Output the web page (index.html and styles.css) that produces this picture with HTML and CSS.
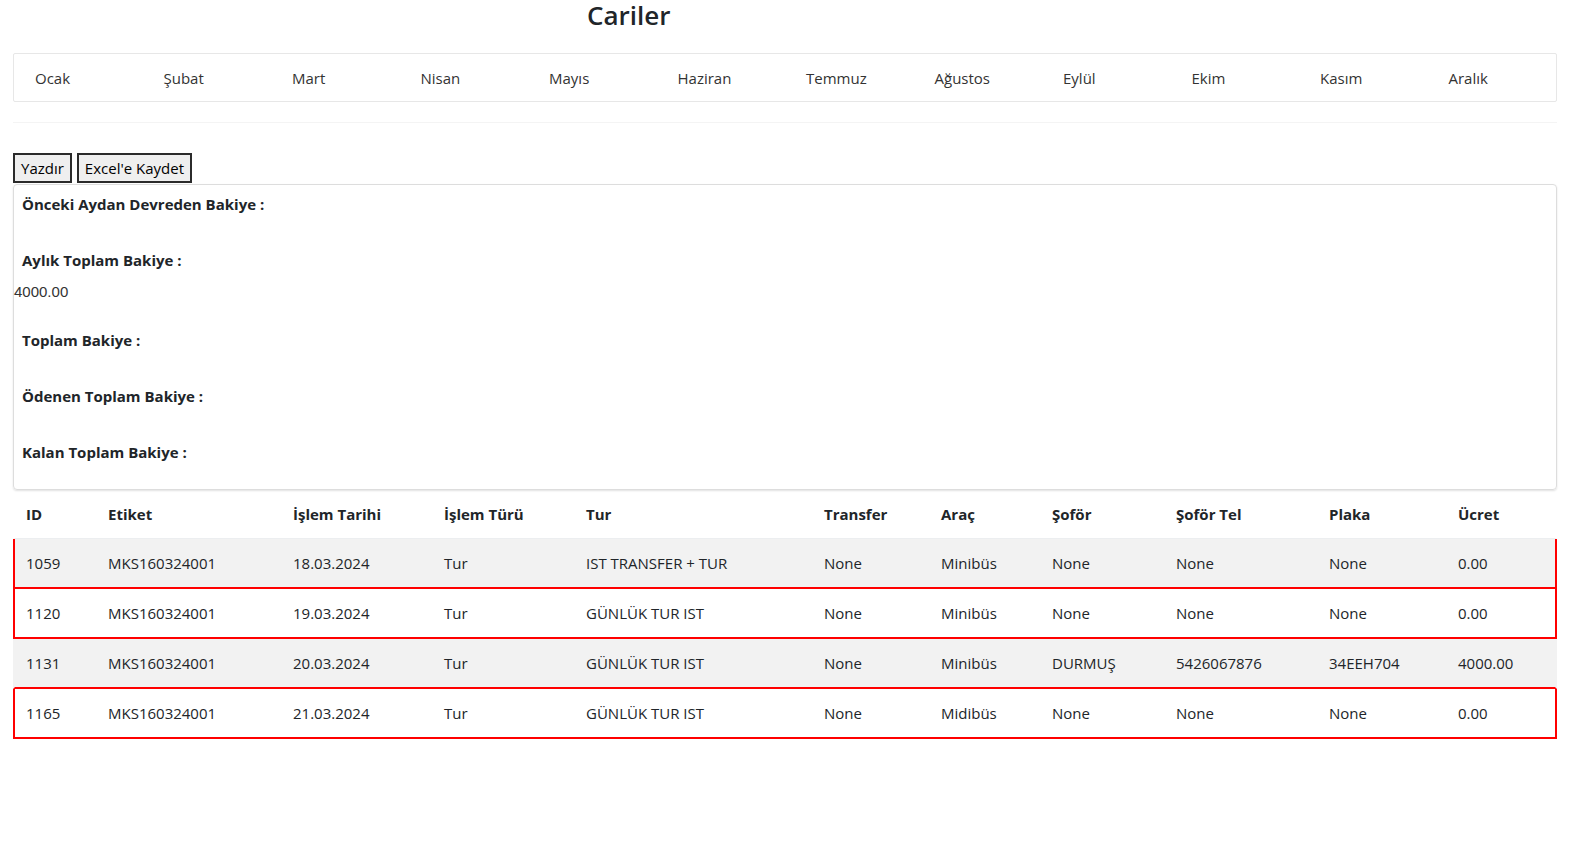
FILE: index.html
```html
<!DOCTYPE html>
<html lang="tr">
<head>
<meta charset="utf-8">
<title>Cariler</title>
<link rel="stylesheet" href="styles.css">
</head>
<body>
<div class="page">
  <h1 class="title">Cariler</h1>
  <nav class="months">
    <a class="month">Ocak</a>
    <a class="month">Şubat</a>
    <a class="month">Mart</a>
    <a class="month">Nisan</a>
    <a class="month">Mayıs</a>
    <a class="month">Haziran</a>
    <a class="month">Temmuz</a>
    <a class="month">Ağustos</a>
    <a class="month">Eylül</a>
    <a class="month">Ekim</a>
    <a class="month">Kasım</a>
    <a class="month">Aralık</a>
  </nav>
  <div class="divider"></div>
  <div class="actions">
    <button class="btn">Yazdır</button>
    <button class="btn">Excel'e Kaydet</button>
  </div>
  <div class="card">
    <div class="item"><h5 class="label">Önceki Aydan Devreden Bakiye :</h5></div>
    <div class="item"><h5 class="label">Aylık Toplam Bakiye :</h5><div class="value">4000.00</div></div>
    <div class="item"><h5 class="label">Toplam Bakiye :</h5></div>
    <div class="item"><h5 class="label">Ödenen Toplam Bakiye :</h5></div>
    <div class="item"><h5 class="label">Kalan Toplam Bakiye :</h5></div>
  </div>
  <table class="data">
    <colgroup>
      <col class="c-id"><col class="c-etiket"><col class="c-tarih"><col class="c-turu"><col class="c-tur"><col class="c-transfer"><col class="c-arac"><col class="c-sofor"><col class="c-tel"><col class="c-plaka"><col class="c-ucret">
    </colgroup>
    <thead>
      <tr>
        <th>ID</th><th>Etiket</th><th>İşlem Tarihi</th><th>İşlem Türü</th><th>Tur</th><th>Transfer</th><th>Araç</th><th>Şoför</th><th>Şoför Tel</th><th>Plaka</th><th>Ücret</th>
      </tr>
    </thead>
    <tbody>
      <tr class="odd flag flagged-bottom">
        <td>1059</td><td>MKS160324001</td><td>18.03.2024</td><td>Tur</td><td>IST TRANSFER + TUR</td><td>None</td><td>Minibüs</td><td>None</td><td>None</td><td>None</td><td>0.00</td>
      </tr>
      <tr class="flag flagged-bottom">
        <td>1120</td><td>MKS160324001</td><td>19.03.2024</td><td>Tur</td><td>GÜNLÜK TUR IST</td><td>None</td><td>Minibüs</td><td>None</td><td>None</td><td>None</td><td>0.00</td>
      </tr>
      <tr class="odd flagged-bottom">
        <td>1131</td><td>MKS160324001</td><td>20.03.2024</td><td>Tur</td><td>GÜNLÜK TUR IST</td><td>None</td><td>Minibüs</td><td>DURMUŞ</td><td>5426067876</td><td>34EEH704</td><td>4000.00</td>
      </tr>
      <tr class="flag flagged-bottom">
        <td>1165</td><td>MKS160324001</td><td>21.03.2024</td><td>Tur</td><td>GÜNLÜK TUR IST</td><td>None</td><td>Midibüs</td><td>None</td><td>None</td><td>None</td><td>0.00</td>
      </tr>
    </tbody>
  </table>
</div>
</body>
</html>
```

FILE: styles.css
```css
* { box-sizing: border-box; }

html, body {
  margin: 0;
  padding: 0;
  background: #ffffff;
}

body {
  font-family: "Open Sans", "Noto Sans", sans-serif;
  color: #212529;
}

.page {
  width: 1557px;
  padding-left: 13px;
}

.title {
  margin: 0 0 23px 0;
  padding-left: 574px;
  font-size: 26px;
  font-weight: 600;
  line-height: 30px;
  color: #212529;
}

.months {
  display: grid;
  grid-template-columns: repeat(12, 1fr);
  height: 49px;
  border: 1px solid #e7e7e7;
  border-radius: 2px;
}

.month {
  padding-left: 21px;
  line-height: 48px;
  font-size: 15px;
  color: #333333;
}

.divider {
  margin-top: 20px;
  border-top: 1px solid #f4f4f4;
}

.actions {
  display: flex;
  gap: 5px;
  margin-top: 30px;
}

.btn {
  height: 30px;
  padding: 0 6px;
  font-family: "Open Sans", "Noto Sans", sans-serif;
  font-size: 15px;
  color: #000000;
  background: #efefef;
  border: 2px solid #2b2b2b;
  border-radius: 0;
}

.card {
  display: flex;
  flex-direction: column;
  gap: 24px;
  margin-top: 1px;
  padding: 7px 0 17px 0;
  border: 1px solid #dddddd;
  border-radius: 4px;
  box-shadow: 0 1px 2px rgba(0, 0, 0, 0.12);
}

.item {
  display: flex;
  flex-direction: column;
}

.label {
  margin: 0;
  padding: 0 0 8px 8px;
  font-size: 15px;
  font-weight: 700;
  line-height: 24px;
  color: #212529;
}

.value {
  font-family: "Liberation Sans", Arial, sans-serif;
  font-size: 15px;
  line-height: 24px;
  color: #333333;
}

.data {
  width: 1544px;
  table-layout: fixed;
  border-collapse: separate;
  border-spacing: 0;
  font-size: 15px;
}

.c-id { width: 82px; }
.c-etiket { width: 185px; }
.c-tarih { width: 151px; }
.c-turu { width: 142px; }
.c-tur { width: 238px; }
.c-transfer { width: 117px; }
.c-arac { width: 111px; }
.c-sofor { width: 124px; }
.c-tel { width: 153px; }
.c-plaka { width: 129px; }
.c-ucret { width: 112px; }

.data th {
  height: 49px;
  padding: 0 0 0 13px;
  text-align: left;
  font-weight: 700;
  border-bottom: 1px solid #eceef0;
}

.data td {
  height: 50px;
  padding: 0 0 0 13px;
  white-space: nowrap;
  border-bottom: 2px solid transparent;
}

.data th:first-child,
.data td:first-child {
  padding-left: 11px;
  border-left: 2px solid transparent;
}

.data th:last-child,
.data td:last-child {
  border-right: 2px solid transparent;
}

.data tr.odd td {
  background: #f2f2f2;
}

.data tr.flagged-bottom td {
  border-bottom-color: #ff0000;
}

.data tr.flag td:first-child {
  border-left-color: #ff0000;
}

.data tr.flag td:last-child {
  border-right-color: #ff0000;
}
```
